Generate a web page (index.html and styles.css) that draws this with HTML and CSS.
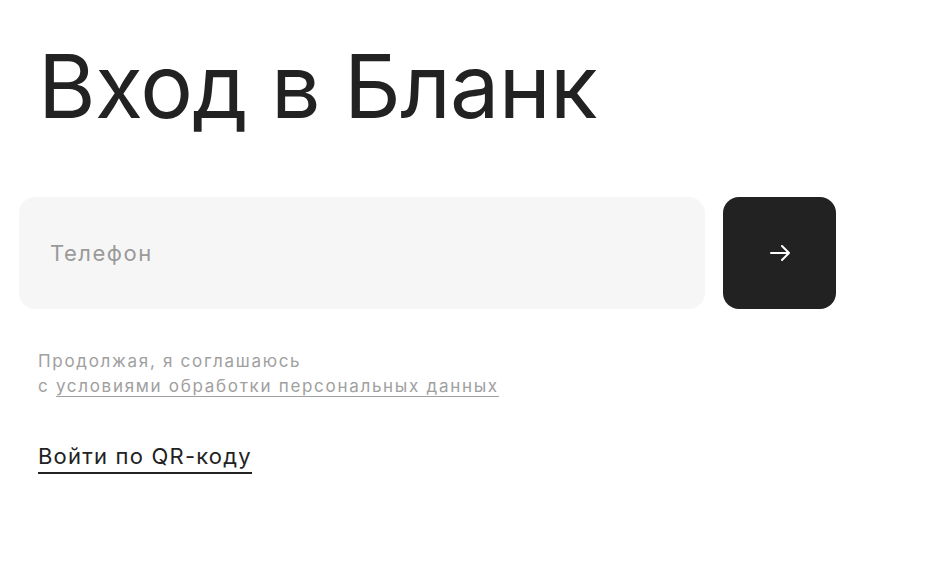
FILE: index.html
```html
<!DOCTYPE html>
<html lang="ru">
<head>
<meta charset="utf-8">
<link rel="stylesheet" href="styles.css">
</head>
<body>
<main class="page">
  <h1 class="title">Вход в Бланк</h1>
  <form class="login">
    <div class="field">
      <input class="phone" type="tel" placeholder="Телефон">
    </div>
    <button class="submit" type="button" aria-label="Далее">
      <svg width="24" height="24" viewBox="0 0 24 24" fill="none" stroke="#fff" stroke-width="2" stroke-linecap="round" stroke-linejoin="round">
        <path d="M3 12h18M14 5l7 7-7 7"/>
      </svg>
    </button>
  </form>
  <p class="terms">Продолжая, я соглашаюсь<br>с <a href="#" class="terms-link">условиями обработки персональных данных</a></p>
  <a href="#" class="qr">Войти по QR-коду</a>
</main>
</body>
</html>
```
FILE: styles.css
```css
html, body {
  margin: 0;
  padding: 0;
  background: #fff;
}
body {
  font-family: Inter, "Noto Sans", sans-serif;
  color: #222;
}
.page {
  padding: 24px 0 0 19px;
}
.title {
  margin: 0 0 0 19px;
  font-size: 88px;
  font-weight: 400;
  line-height: 124px;
  letter-spacing: -0.7px;
  color: #222;
}
.login {
  display: flex;
  gap: 18px;
  margin-top: 49px;
}
.field {
  width: 686px;
  height: 112px;
  background: #f6f6f6;
  border-radius: 16px;
  display: flex;
  align-items: center;
}
.phone {
  border: 0;
  background: transparent;
  outline: none;
  width: 100%;
  padding: 0 0 0 31px;
  font-family: inherit;
  font-size: 22px;
  letter-spacing: 1.5px;
  color: #222;
}
.phone::placeholder {
  color: #9a9a9a;
}
.submit {
  width: 113px;
  height: 112px;
  border: 0;
  border-radius: 16px;
  background: #222;
  display: flex;
  align-items: center;
  justify-content: center;
  padding: 0;
}
.terms {
  margin: 40px 0 0 19px;
  font-size: 17px;
  line-height: 25px;
  color: #a0a0a0;
  letter-spacing: 1.7px;
}
.terms-link {
  color: #a0a0a0;
  text-decoration: none;
  border-bottom: 1px solid #a0a0a0;
}
.qr {
  display: inline-block;
  margin: 44px 0 0 19px;
  padding-bottom: 3px;
  font-size: 22px;
  letter-spacing: 1.2px;
  color: #222;
  text-decoration: none;
  border-bottom: 2px solid #222;
  line-height: 26px;
}
```
